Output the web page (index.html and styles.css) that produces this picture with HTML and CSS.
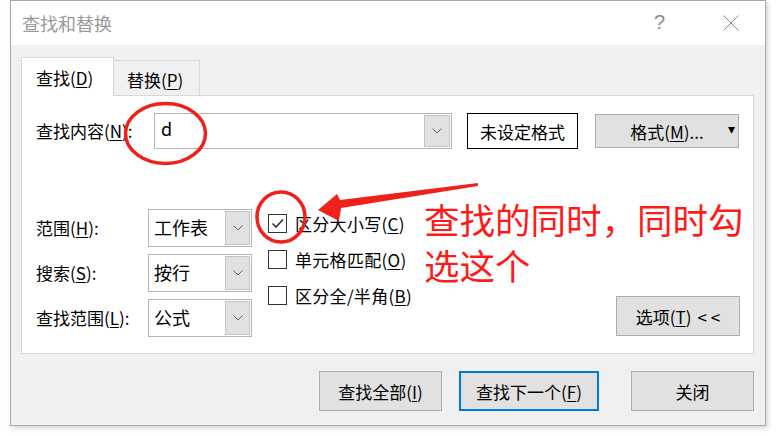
FILE: index.html
```html
<!DOCTYPE html>
<html lang="zh-CN">
<head>
  <meta charset="UTF-8">
  <title>查找和替换</title>
  <link rel="stylesheet" href="styles.css">
</head>
<body>
<div class="dialog">
  <!-- Title bar -->
  <div class="titlebar">
    <span class="title">查找和替换</span>
    <span class="help">?</span>
    <svg class="close" width="16" height="16" viewBox="0 0 16 16">
      <line x1="0.5" y1="0.5" x2="15.5" y2="15.5" stroke="#8a8a8a" stroke-width="1"/>
      <line x1="15.5" y1="0.5" x2="0.5" y2="15.5" stroke="#8a8a8a" stroke-width="1"/>
    </svg>
  </div>

  <div class="dialog-body">
    <!-- Tabs -->
    <div class="tabs">
      <div class="tab active">查找(<u>D</u>)</div>
      <div class="tab">替换(<u>P</u>)</div>
    </div>

    <div class="panel">
      <!-- Find what -->
      <div class="find-row">
        <div class="find-label">查找内容(<u>N</u>):</div>
        <div class="combo">
          <span class="combo-text">d</span>
          <span class="drop"><svg width="10" height="6" viewBox="0 0 10 6"><polyline points="0.5,0.5 5,5 9.5,0.5" fill="none" stroke="#666" stroke-width="1"/></svg></span>
        </div>
        <div class="format-box">未设定格式</div>
        <div class="btn format-btn">格式(<u>M</u>)... <span class="caret">&#9662;</span></div>
      </div>

      <!-- Options -->
      <div class="options">
        <div class="select-grid">
          <div class="opt-label">范围(<u>H</u>):</div>
          <div class="select"><span>工作表</span><span class="drop"><svg width="10" height="6" viewBox="0 0 10 6"><polyline points="0.5,0.5 5,5 9.5,0.5" fill="none" stroke="#666" stroke-width="1"/></svg></span></div>
          <div class="opt-label">搜索(<u>S</u>):</div>
          <div class="select"><span>按行</span><span class="drop"><svg width="10" height="6" viewBox="0 0 10 6"><polyline points="0.5,0.5 5,5 9.5,0.5" fill="none" stroke="#666" stroke-width="1"/></svg></span></div>
          <div class="opt-label">查找范围(<u>L</u>):</div>
          <div class="select"><span>公式</span><span class="drop"><svg width="10" height="6" viewBox="0 0 10 6"><polyline points="0.5,0.5 5,5 9.5,0.5" fill="none" stroke="#666" stroke-width="1"/></svg></span></div>
        </div>

        <div class="checks">
          <div class="check-row">
            <span class="box"><svg width="17" height="17" viewBox="0 0 17 17"><polyline points="3.5,8.5 7,12 14,4.5" fill="none" stroke="#333" stroke-width="1.6"/></svg></span>
            区分大小写(<u>C</u>)
          </div>
          <div class="check-row"><span class="box"></span>单元格匹配(<u>O</u>)</div>
          <div class="check-row"><span class="box"></span>区分全/半角(<u>B</u>)</div>
        </div>

        <div class="btn options-btn">选项(<u>T</u>) <span class="chev">&lt;&lt;</span></div>
      </div>
    </div>

    <!-- Action buttons -->
    <div class="actions">
      <div class="btn action">查找全部(<u>I</u>)</div>
      <div class="btn action default">查找下一个(<u>F</u>)</div>
      <div class="btn action close-btn">关闭</div>
    </div>
  </div>
</div>

<!-- Red annotations drawn over the screenshot -->
<svg class="marks" width="776" height="436" viewBox="0 0 776 436">
  <ellipse cx="165.5" cy="133.5" rx="40" ry="30" fill="none" stroke="#f0211a" stroke-width="3.5"/>
  <ellipse cx="281" cy="217" rx="24" ry="25" fill="none" stroke="#f0211a" stroke-width="3.5"/>
  <polygon points="318,210 337,194 340,200 478,183 478,186 341,208 339,221" fill="#f0211a"/>
</svg>
<div class="note note-1">查找的同时，同时勾</div>
<div class="note note-2">选这个</div>
</body>
</html>
```

FILE: styles.css
```css
body {
  margin: 0;
  background: #fff;
  font-family: "Noto Sans CJK SC", "Noto Sans", sans-serif;
  color: #000;
  position: relative;
  width: 776px;
  height: 436px;
  overflow: hidden;
}
u {
  text-decoration-thickness: 1px;
  text-underline-offset: 2px;
}
.dialog {
  margin-left: 10px;
  width: 756px;
  height: 426px;
  box-sizing: border-box;
  border: 1px solid #a9a9a9;
  background: #f0f0f0;
  box-shadow: 2px 2px 5px rgba(0,0,0,0.18);
}
.titlebar {
  height: 44px;
  background: #fff;
  display: flex;
  align-items: center;
  padding-left: 11px;
  padding-right: 26px;
}
.title {
  font-size: 18px;
  color: #9a9a9a;
  flex: 1;
}
.help {
  font-size: 20px;
  color: #8a8a8a;
  font-family: "Liberation Sans", sans-serif;
  font-weight: 300;
  margin-right: 58px;
  margin-top: -1px;
}
.close {
  display: block;
}
.dialog-body {
  padding: 12px 11px 0 10px;
}
.tabs {
  display: flex;
  align-items: flex-end;
  height: 39px;
  margin-bottom: -1px;
  position: relative;
  z-index: 1;
}
.tab {
  box-sizing: border-box;
  height: 36px;
  width: 87px;
  margin-left: -1px;
  border: 1px solid #d9d9d9;
  border-bottom: none;
  display: flex;
  align-items: center;
  padding-left: 13px;
  font-size: 17px;
  padding-top: 2px;
}
.tab.active {
  height: 39px;
  width: 93px;
  margin-left: 0;
  background: #fff;
  position: relative;
  z-index: 1;
  padding-top: 0;
  padding-left: 14px;
}
.panel {
  box-sizing: border-box;
  height: 259px;
  background: #fff;
  border: 1px solid #d9d9d9;
  padding: 17px 13px 0 14px;
}
.find-row {
  display: flex;
  align-items: center;
  height: 36px;
  font-size: 17px;
}
.find-label {
  width: 118px;
  margin-top: -2px;
}
.combo {
  box-sizing: border-box;
  width: 298px;
  height: 36px;
  border: 1px solid #b4b4b4;
  display: flex;
  align-items: center;
  padding: 1px;
}
.combo-text {
  flex: 1;
  font-size: 18px;
  padding-left: 5px;
  margin-top: -6px;
}
.drop {
  box-sizing: border-box;
  width: 26px;
  align-self: stretch;
  background: #e1e1e1;
  border: 1px solid #c4c4c4;
  display: flex;
  align-items: center;
  justify-content: center;
}
.format-box {
  box-sizing: border-box;
  margin-left: 15px;
  width: 111px;
  height: 36px;
  border: 1px solid #000;
  display: flex;
  align-items: center;
  justify-content: center;
}
.btn {
  box-sizing: border-box;
  background: #e1e1e1;
  border: 1px solid #adadad;
  display: flex;
  align-items: center;
  justify-content: center;
  font-size: 17px;
}
.format-btn {
  margin-left: 17px;
  width: 144px;
  height: 34px;
  position: relative;
}
.caret {
  position: absolute;
  right: 3px;
  top: 6px;
  font-size: 14px;
  font-family: "DejaVu Sans", sans-serif;
}
.options {
  display: flex;
  margin-top: 60px;
  height: 128px;
}
.select-grid {
  display: grid;
  grid-template-columns: 112px 104px;
  grid-auto-rows: 38px;
  row-gap: 7px;
  align-items: center;
  font-size: 17px;
}
.opt-label {
  margin-top: -2px;
}
.select {
  box-sizing: border-box;
  height: 38px;
  border: 1px solid #b4b4b4;
  padding: 1px;
  display: flex;
  align-items: center;
}
.select > span:first-child {
  flex: 1;
  padding-left: 4px;
  font-size: 18px;
  margin-top: -2px;
}
.select .drop {
  width: 25px;
}
.checks {
  margin-left: 16px;
  padding-top: 5px;
  display: flex;
  flex-direction: column;
  gap: 17px;
}
.check-row {
  display: flex;
  align-items: center;
  height: 19px;
  font-size: 17px;
  letter-spacing: 0.3px;
  white-space: nowrap;
}
.box {
  box-sizing: border-box;
  width: 19px;
  height: 19px;
  border: 1px solid #333;
  margin-right: 8px;
  display: flex;
  align-items: center;
  justify-content: center;
  background: #fff;
}
.options-btn {
  margin-left: auto;
  align-self: flex-end;
  margin-bottom: 1px;
  width: 124px;
  height: 40px;
}
.chev {
  margin-left: 6px;
  letter-spacing: 4px;
  margin-right: -4px;
}
.actions {
  display: flex;
  justify-content: flex-end;
  margin-top: 17px;
}
.action {
  width: 123px;
  height: 40px;
}
.action.default {
  width: 140px;
  margin-left: 17px;
  border: 2px solid #0078d7;
}
.action.close-btn {
  margin-left: 32px;
}
.marks {
  position: absolute;
  left: 0;
  top: 0;
  pointer-events: none;
}
.note {
  position: absolute;
  left: 424px;
  font-size: 35.5px;
  line-height: 40px;
  color: #ff1a1a;
  white-space: nowrap;
}
.note-1 {
  top: 199px;
}
.note-2 {
  top: 245px;
}
```
